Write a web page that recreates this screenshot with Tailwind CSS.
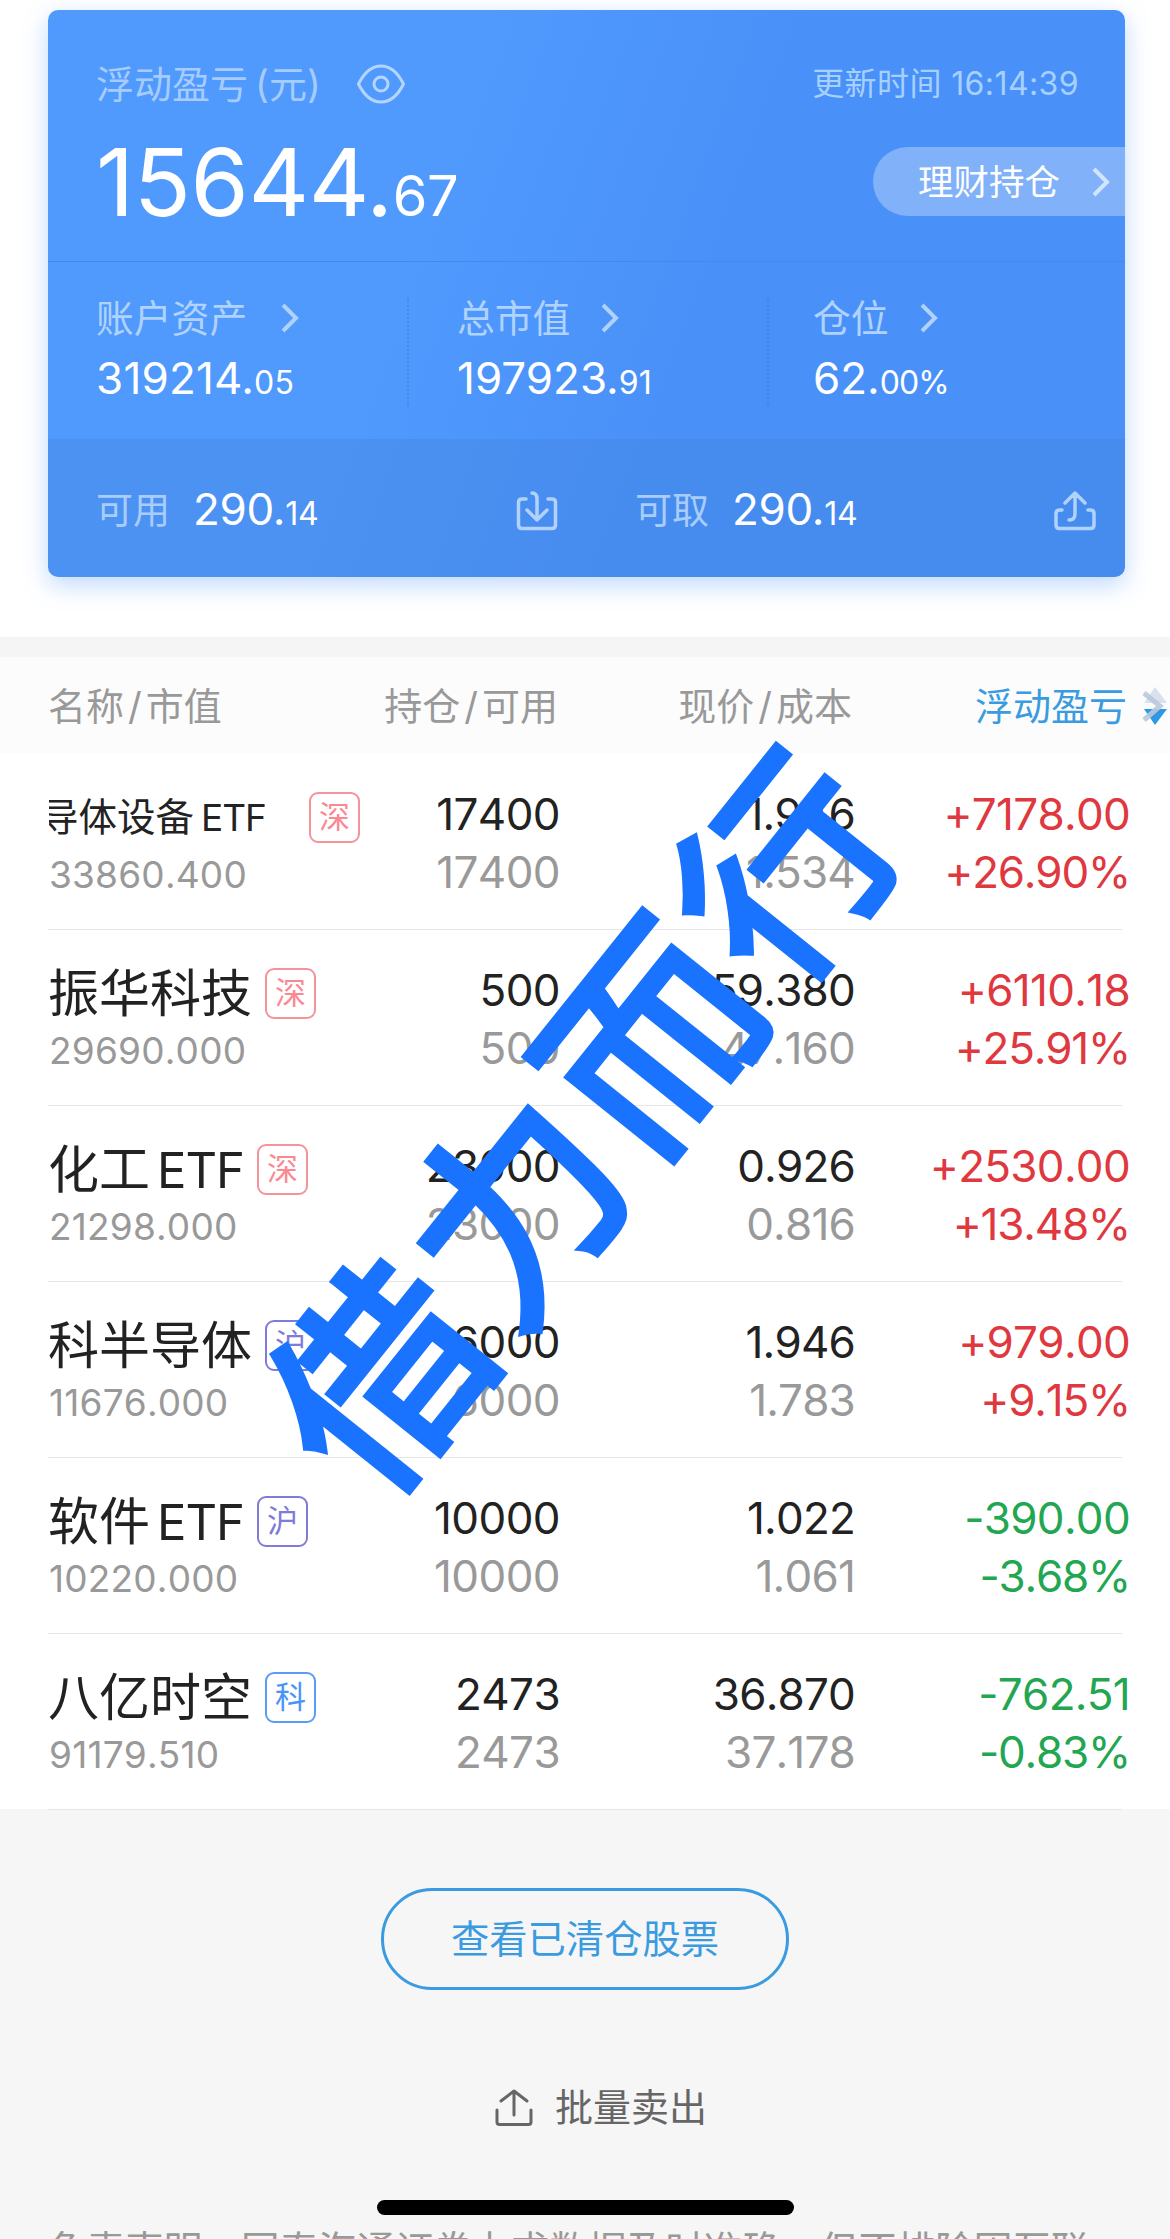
<!DOCTYPE html>
<html lang="zh-CN">
 <head>
  <meta charset="utf-8"/>
  <meta content="width=device-width, initial-scale=1" name="viewport"/>
  <title>持仓</title>
  <script src="https://cdn.jsdelivr.net/npm/@tailwindcss/browser@4"></script>
  <style>
   body {
      font-family: Inter, "Noto Sans CJK SC", sans-serif;
    }
  </style>
 </head>
 <body class="bg-[#f6f6f6] w-[1170px] h-[2239px] overflow-hidden relative text-[#222] whitespace-nowrap">
  <!-- account card -->
  <div class="bg-white h-[637px] pt-[10px] pl-12">
   <div class="w-[1077px] h-[567px] rounded-[10px] overflow-hidden bg-linear-[110deg] from-[#5099fd] from-35% to-[#4991f8] to-60% shadow-[0_8px_24px_rgba(73,145,248,0.35)] text-white flex flex-col">
    <div class="h-[251px] pl-[48px] pt-[47px]">
     <div class="flex items-center h-[54px] pr-[46px]">
      <span class="text-[38px] text-[#a6ccff]">浮动盈亏<span class="ml-[7px]">(元)</span></span>
      <svg class="w-[48px] h-[40px] ml-[36px]" viewBox="0 0 48 40" fill="none" stroke="#b4d5ff" stroke-width="3">
       <path d="M1.500 20C6 11 13 2 24 2s18 9 22.500 18C42 29 35 38 24 38S6 29 1.500 20z"/>
       <circle cx="24" cy="20" r="7"/>
      </svg>
      <span class="ml-auto text-[32px] tracking-[0.4px] text-[#a6d0ff]">更新时间 16:14:39</span>
     </div>
     <div class="flex justify-between h-[120px] mt-[8px]">
      <div class="text-[94px] leading-[126px] tracking-[-0.4px]">15644.<span class="text-[56px]">67</span></div>
      <div class="w-[252px] h-[69px] mt-[28px] rounded-l-full bg-[#81b1f9] flex items-center pl-[45px]">
       <span class="text-[35.5px] pt-[2px]">理财持仓</span>
       <svg class="w-[18px] h-[30px] ml-[32px]" viewBox="0 0 18 30" fill="none" stroke="#d3e4ff" stroke-width="4"><path d="M2 2l13 13L2 28"/></svg>
      </div>
     </div>
    </div>
    <div class="h-[178px] border-t border-[#438aef] grid grid-cols-[361px_356px_1fr] pl-[48px]">
     <div class="relative pt-[29px]">
      <div class="flex items-center h-[54px] text-[37.800px] text-[#b0d2ff]">账户资产
       <svg class="w-[18px] h-[30px] ml-[34px]" viewBox="0 0 18 30" fill="none" stroke="#b0d2ff" stroke-width="4"><path d="M2 2l13 13L2 28"/></svg>
      </div>
      <div class="text-[44px] leading-[66px] tracking-[0.2px]">319214.<span class="text-[32px]">05</span></div>
      <div class="absolute left-[311px] top-[36px] h-[108px] border-l-2 border-dotted border-[#448bef]"></div>
     </div>
     <div class="relative pt-[29px]">
      <div class="flex items-center h-[54px] text-[37.800px] text-[#b0d2ff]">总市值
       <svg class="w-[18px] h-[30px] ml-[31px]" viewBox="0 0 18 30" fill="none" stroke="#b0d2ff" stroke-width="4"><path d="M2 2l13 13L2 28"/></svg>
      </div>
      <div class="text-[44px] leading-[66px]">197923.<span class="text-[32px]">91</span></div>
      <div class="absolute left-[310px] top-[36px] h-[108px] border-l-2 border-dotted border-[#3f86ea]"></div>
     </div>
     <div class="pt-[29px]">
      <div class="flex items-center h-[54px] text-[37.800px] text-[#b0d2ff]">仓位
       <svg class="w-[18px] h-[30px] ml-[31px]" viewBox="0 0 18 30" fill="none" stroke="#b0d2ff" stroke-width="4"><path d="M2 2l13 13L2 28"/></svg>
      </div>
      <div class="text-[44px] leading-[66px]">62.<span class="text-[32px] tracking-[-1px]">00%</span></div>
     </div>
    </div>
    <div class="flex-1 bg-[#3c78c8]/20 grid grid-cols-[539px_1fr] pl-[48px] pt-[39px]">
     <div class="flex items-center h-[66px]">
      <span class="text-[37px] text-[#a9cdfb] w-[97px]">可用</span>
      <span class="text-[44px] leading-[66px] tracking-[-0.3px]">290.<span class="text-[32px]">14</span></span>
      <svg class="absolute left-[516px] w-[42px] h-[40px]" viewBox="0 0 42 40" fill="none" stroke="#b0d2fd" stroke-width="3.500" stroke-linecap="round" stroke-linejoin="round">
       <path d="M10 8H6q-3.500 0-3.500 3.500V34q0 3.500 3.500 3.500h30q3.500 0 3.500-3.500V11.500q0-3.500-3.500-3.500h-4M16 2q5 0 5 6v21M11 19l10 10 10-10"/>
      </svg>
     </div>
     <div class="flex items-center h-[66px]">
      <span class="text-[37px] text-[#a9cdfb] w-[97px]">可取</span>
      <span class="text-[44px] leading-[66px] tracking-[-0.3px]">290.<span class="text-[32px]">14</span></span>
      <svg class="ml-auto mr-[29px] w-[42px] h-[40px]" viewBox="0 0 42 40" fill="none" stroke="#b0d2fd" stroke-width="3.500" stroke-linecap="round" stroke-linejoin="round">
       <path d="M8 19H5.500q-3.500 0-3.500 3.500V34q0 3.500 3.500 3.500h31q3.500 0 3.500-3.500V22.500q0-3.500-3.500-3.500H34M15 29q6 0 6-6V2M11 12L21 2l10 10"/>
      </svg>
     </div>
    </div>
   </div>
  </div>

  <!-- positions table -->
  <div class="h-5 bg-[#f5f5f5]"></div>
  <div class="h-24 bg-[#fcfcfc] grid grid-cols-[320px_190px_296px_273px] items-center pl-12 pt-[2px] text-[38px] text-[#999]">
   <div>名称<span class="mx-[4px]">/</span>市值</div>
   <div class="text-right">持仓<span class="mx-[4px]">/</span>可用</div>
   <div class="text-right pr-[2px]">现价<span class="mx-[4px]">/</span>成本</div>
   <div class="text-right text-[38px] text-[#3a9be0]">浮动盈亏</div>
   <svg class="absolute left-[1141px] top-[685px] w-7 h-11" viewBox="0 0 28 44">
    <path d="M14 2L26 18H3z" fill="#d9e2ec"/>
    <path d="M3 24h23L14 40z" fill="#2f97e3"/>
    <path d="M3 8l16 13L3 35" fill="none" stroke="#b9c8dc" stroke-opacity="0.9" stroke-width="5"/>
   </svg>
  </div>
  <div class="bg-white h-[1056px] [font-kerning:none]" id="positions"></div>

  <!-- footer -->
  <div class="flex flex-col items-center pt-[79px]">
   <button class="w-[408px] h-[102px] border-3 border-[#3a9be0] rounded-full text-[38.300px] text-[#3a9be0] pt-[2px]">查看已清仓股票</button>
   <div class="flex items-center h-[60px] mt-[87px] ml-[32px] text-[38px] text-[#666]">
    <svg class="w-[38px] h-[37px] mr-[22px]" viewBox="0 0 38 37" fill="none" stroke="#666" stroke-width="3" stroke-linecap="round" stroke-linejoin="round">
     <path d="M2 21v12q0 2.500 2.500 2.500h29Q36 35.500 36 33V21M19 26V2M6 12L19 2l13 10"/>
    </svg>
    批量卖出
   </div>
  </div>
  <div class="pl-12 mt-[84px] text-[38.600px] leading-[58px] text-[#999]">免责声明：国泰海通证券力求数据及时准确，但不排除因互联</div>
  <div class="absolute left-[377px] top-[2200px] w-[417px] h-[15px] rounded-full bg-black"></div>

  <!-- watermark -->
  <div class="absolute left-[588px] top-[1121px] -translate-x-1/2 -translate-y-1/2 -rotate-[51.3deg] text-[209px] tracking-[8px] leading-none text-[#1a73ff] [-webkit-text-stroke:7px_#1a73ff]">借力而行</div>

  <script>
   const tagColors = {
      深: "border-[#f5929c] text-[#fb8892]",
      沪: "border-[#7f7bd8] text-[#7f7bd8]",
      科: "border-[#5a9cf5] text-[#4a93f8]",
    };

    const positions = [
      { name: "导体设备ETF", tag: "深", value: "33860.400", qty: "17400", avail: "17400", price: "1.946", cost: "1.534", pl: "+7178.00", pct: "+26.90%", small: true },
      { name: "振华科技", tag: "深", value: "29690.000", qty: "500", avail: "500", price: "59.380", cost: "47.160", pl: "+6110.18", pct: "+25.91%" },
      { name: "化工ETF", tag: "深", value: "21298.000", qty: "23000", avail: "23000", price: "0.926", cost: "0.816", pl: "+2530.00", pct: "+13.48%" },
      { name: "科半导体", tag: "沪", value: "11676.000", qty: "6000", avail: "6000", price: "1.946", cost: "1.783", pl: "+979.00", pct: "+9.15%" },
      { name: "软件ETF", tag: "沪", value: "10220.000", qty: "10000", avail: "10000", price: "1.022", cost: "1.061", pl: "-390.00", pct: "-3.68%" },
      { name: "八亿时空", tag: "科", value: "91179.510", qty: "2473", avail: "2473", price: "36.870", cost: "37.178", pl: "-762.51", pct: "-0.83%" },
    ];

    document.getElementById("positions").innerHTML = positions.map((p) => {
      const name = p.name.replace("ETF", '<span class="ml-[7px] text-[0.96em] tracking-[-1px]">ETF</span>');
      const nameBox = p.small
        ? "w-[260px] ml-[1px] overflow-hidden text-[38.500px]"
        : "mr-[13px] text-[51px]";
      const plColor = p.pl[0] === "+" ? "text-[#e0383f]" : "text-[#22a652]";
      return `
      <div class="relative h-[176px] grid grid-cols-[320px_192px_295px_275px] pl-12">
       <div class="pt-[35px]">
        <div class="flex items-center h-[58px]">
         <div class="${nameBox} pt-[2px]"><span class="${p.small ? "-ml-[9px]" : ""}">${name}</span></div>
         <span class="size-[51px] border-2 rounded-[9px] flex items-center justify-center text-[31px] ${tagColors[p.tag]}">${p.tag}</span>
        </div>
        <div class="pl-[1px] text-[37px] leading-[58px] tracking-[0.2px] text-[#999]">${p.value}</div>
       </div>
       <div class="pt-[32px] text-[44px] leading-[58px] tracking-[-0.6px] text-right">${p.qty}<div class="text-[#999]">${p.avail}</div></div>
       <div class="pt-[32px] text-[44px] leading-[58px] tracking-[-0.8px] text-right">${p.price}<div class="text-[#999]">${p.cost}</div></div>
       <div class="pt-[32px] text-[44px] leading-[58px] tracking-[-0.7px] text-right ${plColor}">${p.pl}<div class="tracking-[-1.2px]">${p.pct}</div></div>
       <div class="absolute left-12 bottom-[-1px] w-[1074px] h-px bg-[#e6e6e6]"></div>
      </div>`;
    }).join("");
  </script>
 </body>
</html>
